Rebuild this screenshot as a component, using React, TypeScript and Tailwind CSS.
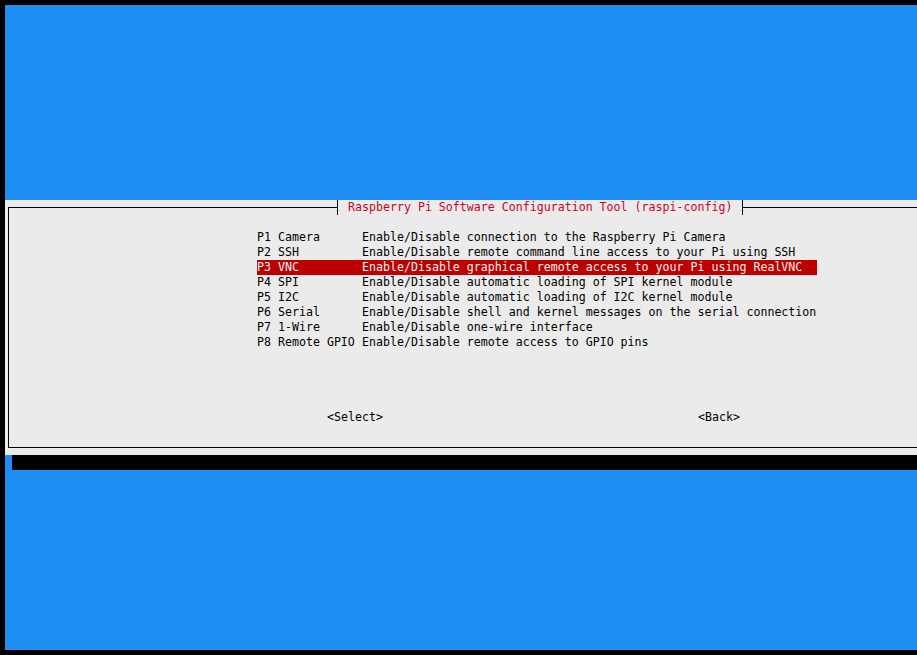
const items = [
  { key: "P1 Camera", desc: "Enable/Disable connection to the Raspberry Pi Camera" },
  { key: "P2 SSH", desc: "Enable/Disable remote command line access to your Pi using SSH" },
  { key: "P3 VNC", desc: "Enable/Disable graphical remote access to your Pi using RealVNC" },
  { key: "P4 SPI", desc: "Enable/Disable automatic loading of SPI kernel module" },
  { key: "P5 I2C", desc: "Enable/Disable automatic loading of I2C kernel module" },
  { key: "P6 Serial", desc: "Enable/Disable shell and kernel messages on the serial connection" },
  { key: "P7 1-Wire", desc: "Enable/Disable one-wire interface" },
  { key: "P8 Remote GPIO", desc: "Enable/Disable remote access to GPIO pins" },
];

const selected = 2;

function MenuRow({ label, desc, active }: { label: string; desc: string; active: boolean }) {
  return (
    <div
      className={`flex h-[15px] w-[560px] ${
        active ? "bg-[#bc0000] text-[#f2f2f2]" : "text-black"
      }`}
    >
      <span className="w-[105px] shrink-0 whitespace-pre">{label}</span>
      <span className="whitespace-pre">{desc}</span>
    </div>
  );
}

export default function App() {
  return (
    <div
      className="w-[917px] h-[655px] overflow-hidden bg-black pt-[5px] pl-[5px] pb-[5px] leading-[15px] text-[11.627px]"
      style={{ fontFamily: '"DejaVu Sans Mono", "Liberation Mono", monospace' }}
    >
      <div className="flex h-full flex-col bg-[#1e8ef5]">
        <div className="h-[195px] shrink-0" />

        {/* dialog */}
        <div className="relative h-[255px] shrink-0 bg-[#ebebeb] pt-[7px] pl-[3px]">
          <div className="h-[241px] border-t border-l border-b border-black pt-[22px] pl-[248px]">
            <div className="flex flex-col">
              {items.map((it, i) => (
                <MenuRow key={it.key} label={it.key} desc={it.desc} active={i === selected} />
              ))}
            </div>
            <div className="mt-[60px] flex pl-[70px] text-black">
              <span className="w-[371px] whitespace-pre">{"<Select>"}</span>
              <span className="whitespace-pre">{"<Back>"}</span>
            </div>
          </div>

          {/* title over the top border */}
          <div className="absolute top-0 left-[329px] flex h-[15px]">
            <div className="w-[3px]" />
            <div className="w-px bg-black" />
            <div className="w-[3px] bg-[#ebebeb]" />
            <span className="whitespace-pre bg-[#ebebeb] px-[7px] text-[#d10019]">
              Raspberry Pi Software Configuration Tool (raspi-config)
            </span>
            <div className="w-[3px] bg-[#ebebeb]" />
            <div className="w-px bg-black" />
          </div>
        </div>

        {/* shadow */}
        <div className="flex h-[15px] shrink-0">
          <div className="w-[7px]" />
          <div className="flex-1 bg-black" />
        </div>

        <div className="flex-1" />
      </div>
    </div>
  );
}
